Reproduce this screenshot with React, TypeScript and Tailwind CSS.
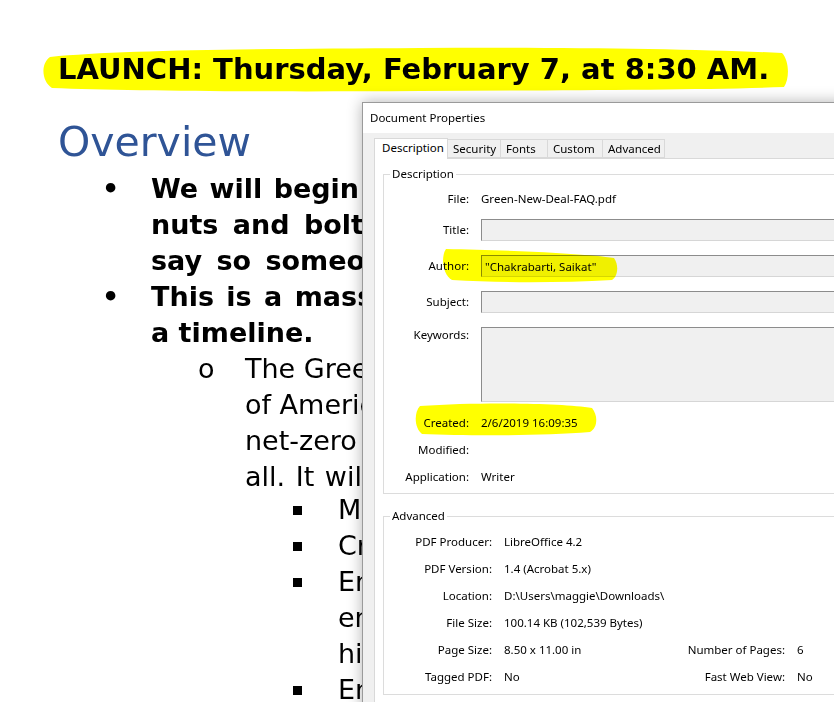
import React from 'react';

// highlighter strokes (page coordinates)
const marks = [
  'M50,57 C120,50 250,49 420,48 C560,47 700,49 782,53 C789,60 790,78 784,87 C700,90 560,90 420,91 C260,92 130,91 52,88 C42,82 40,64 50,57 Z',
  'M446,249 C500,250 580,253 614,258 C619,265 618,276 612,280 C560,283 500,283 452,280 C442,274 441,256 446,249 Z',
  'M420,406 C480,402 560,403 592,408 C598,415 598,428 590,432 C540,436 470,436 422,434 C414,428 414,412 420,406 Z',
];

const Field: React.FC<{ className?: string }> = ({ className = 'h-[22px]', children }) => (
  <div
    className={`${className} flex items-start pl-[3px] pt-[3px] bg-[#f0f0f0] border border-t-[#8c8c8c] border-l-[#8c8c8c] border-r-[#e3e3e3] border-b-[#d6d6d6]`}
  >
    {children}
  </div>
);

const Row: React.FC<{ label: string; labelW: string; className?: string; top?: boolean }> = ({
  label,
  labelW,
  className = 'h-[22px]',
  top,
  children,
}) => (
  <div className={`flex ${top ? 'items-start' : 'items-center'} ${className}`}>
    <div className={`${labelW} shrink-0 text-right`}>{label}</div>
    <div className="ml-[12px] flex-1 whitespace-nowrap">{children}</div>
  </div>
);

const tabs = [
  { name: 'Description', w: 'w-[74px]', active: true },
  { name: 'Security', w: 'w-[53px]' },
  { name: 'Fonts', w: 'w-[47px]' },
  { name: 'Custom', w: 'w-[55px]' },
  { name: 'Advanced', w: 'w-[62px]' },
];

const App: React.FC = () => {
  return (
    <div className="relative isolate w-[834px] h-[702px] overflow-hidden bg-white">
      <div className="pl-[58px] pt-[51px] font-['DejaVu_Sans',sans-serif] text-black whitespace-nowrap">
        <div className="text-[29px] leading-[36px] font-bold">LAUNCH: Thursday, February 7, at 8:30 AM.</div>
        <h1 className="mt-[31px] text-[41px] leading-[48px] text-[#2f5496]">Overview</h1>

        <div className="mt-[5px] text-[27px] leading-[36px]">
          <div className="flex font-bold">
            <div className="w-[93px] shrink-0 pl-[44px]">•</div>
            <div>
              <div className="[word-spacing:2px]">We will begin work on the details of the plan</div>
              <div className="[word-spacing:5px]">nuts and bolts first, and we will honestly</div>
              <div className="[word-spacing:5px]">say so someone can hold us to it.</div>
            </div>
          </div>
          <div className="flex font-bold">
            <div className="w-[93px] shrink-0 pl-[44px]">•</div>
            <div>
              <div className="[word-spacing:3px]">This is a massive transformation of our society with</div>
              <div>a timeline.</div>
            </div>
          </div>
          <div className="flex">
            <div className="w-[187px] shrink-0 pl-[140px]">o</div>
            <div>
              <div>The Green New Deal is a 10-year plan to mobilize every aspect</div>
              <div>of American society at a scale not seen since World War 2</div>
              <div>net-zero greenhouse gas emissions and economic security for</div>
              <div className="[word-spacing:2px]">all. It will:</div>
            </div>
          </div>
          <div className="-mt-[3px]">
            {[
              ['Move America to 100% clean and renewable energy'],
              ['Create millions of family supporting-wage, union jobs'],
              ['Ensure a just transition for all workers and', 'energy communities into good union jobs with', 'high wages'],
              ['Ensure justice and equity'],
            ].map((lines, i) => (
              <div key={i} className="flex">
                <div className="w-[280px] shrink-0 pl-[235px] pt-[14px]">
                  <div className="w-[9px] h-[9px] bg-black" />
                </div>
                <div>
                  {lines.map((l) => (
                    <div key={l}>{l}</div>
                  ))}
                </div>
              </div>
            ))}
          </div>
        </div>
      </div>

      {/* Document Properties window */}
      <div className="absolute left-[362px] top-[102px] w-[520px] h-[640px] border border-[#9a9a9a] bg-[#f0f0f0] shadow-[0_0_14px_rgba(0,0,0,0.3)] font-['Segoe_UI','Noto_Sans',sans-serif] text-[11.5px] leading-[16px] text-black">
        <div className="h-[30px] bg-white pl-[7px] pt-[7px]">Document Properties</div>

        <div className="ml-[11px] mt-[5px] flex items-end">
          {tabs.map((t) =>
            t.active ? (
              <div
                key={t.name}
                className={`${t.w} h-[21px] relative z-10 -mb-px bg-white border border-[#d9d9d9] border-b-0 pl-[7px] pt-[1px]`}
              >
                {t.name}
              </div>
            ) : (
              <div
                key={t.name}
                className={`${t.w} h-[19px] border border-l-0 border-[#d9d9d9] bg-[#f0f0f0] pl-[5px] pt-[1px]`}
              >
                {t.name}
              </div>
            )
          )}
        </div>

        <div className="ml-[11px] h-[560px] border border-[#d9d9d9] bg-white pl-[8px] pt-[7px]">
          <fieldset className="border border-[#dcdcdc] pb-[5px] pt-[6px]">
            <legend className="ml-[6px] px-[2px]">Description</legend>
            <Row label="File:" labelW="w-[85px]">Green-New-Deal-FAQ.pdf</Row>
            <Row label="Title:" labelW="w-[85px]" className="h-[22px] mt-[9px]">
              <Field />
            </Row>
            <Row label="Author:" labelW="w-[85px]" className="h-[22px] mt-[14px]">
              <Field>"Chakrabarti, Saikat"</Field>
            </Row>
            <Row label="Subject:" labelW="w-[85px]" className="h-[22px] mt-[14px]">
              <Field />
            </Row>
            <Row label="Keywords:" labelW="w-[85px]" className="h-[75px] mt-[14px]" top>
              <Field className="h-[75px]" />
            </Row>
            <Row label="Created:" labelW="w-[85px]" className="h-[22px] mt-[10px]">
              2/6/2019 16:09:35
            </Row>
            <Row label="Modified:" labelW="w-[85px]" className="h-[22px] mt-[5px]">
              {''}
            </Row>
            <Row label="Application:" labelW="w-[85px]" className="h-[22px] mt-[5px]">
              Writer
            </Row>
          </fieldset>

          <fieldset className="mt-[14px] border border-[#dcdcdc] pb-[6px] pt-[7px]">
            <legend className="ml-[6px] px-[2px]">Advanced</legend>
            <Row label="PDF Producer:" labelW="w-[108px]">LibreOffice 4.2</Row>
            <Row label="PDF Version:" labelW="w-[108px]" className="h-[22px] mt-[5px]">
              1.4 (Acrobat 5.x)
            </Row>
            <Row label="Location:" labelW="w-[108px]" className="h-[22px] mt-[5px]">
              D:\Users\maggie\Downloads\
            </Row>
            <Row label="File Size:" labelW="w-[108px]" className="h-[22px] mt-[5px]">
              100.14 KB (102,539 Bytes)
            </Row>
            <Row label="Page Size:" labelW="w-[108px]" className="h-[22px] mt-[5px]">
              <div className="flex">
                <div className="w-[170px]">8.50 x 11.00 in</div>
                <div className="w-[111px] text-right">Number of Pages:</div>
                <div className="ml-[12px]">6</div>
              </div>
            </Row>
            <Row label="Tagged PDF:" labelW="w-[108px]" className="h-[22px] mt-[5px]">
              <div className="flex">
                <div className="w-[170px]">No</div>
                <div className="w-[111px] text-right">Fast Web View:</div>
                <div className="ml-[12px]">No</div>
              </div>
            </Row>
          </fieldset>
        </div>
      </div>

      {/* highlighter on top, multiplied so the ink shows through */}
      <svg
        className="absolute left-0 top-0 w-[834px] h-[702px] pointer-events-none mix-blend-multiply"
        viewBox="0 0 834 702"
      >
        {marks.map((d) => (
          <path key={d} d={d} fill="#ffff00" />
        ))}
      </svg>
    </div>
  );
};

export default App;
